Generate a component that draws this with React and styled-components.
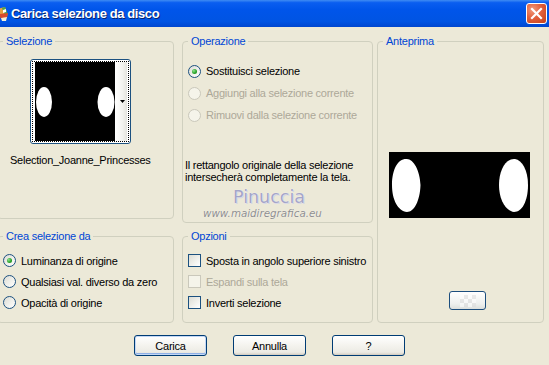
import React from 'react';
import styled, { createGlobalStyle, css } from 'styled-components';

const GlobalStyle = createGlobalStyle`
  html, body { margin: 0; padding: 0; background: #ece9d8; }
  body {
    font-family: "Liberation Sans", Arial, sans-serif;
    font-size: 11px;
    letter-spacing: -0.25px;
    color: #000;
    overflow: hidden;
  }
`;

const Window = styled.div`
  width: 549px;
  height: 365px;
  background: #ece9d8;
  display: flex;
  flex-direction: column;
  overflow: hidden;
`;

const TitleBar = styled.div`
  height: 27px;
  flex: none;
  display: flex;
  align-items: center;
  padding-right: 2px;
  background: linear-gradient(180deg, #3f8cf3 0%, #0a5ef0 10%, #0055ea 35%, #0054e3 80%, #0046cf 100%);
`;

const TitleText = styled.span`
  margin-left: 2px;
  color: #fff;
  font-weight: bold;
  font-size: 13px;
  letter-spacing: -0.4px;
  text-shadow: 1px 1px 0 #0a246a;
`;

const CloseButton = styled.div`
  margin-left: auto;
  width: 21px;
  height: 21px;
  box-sizing: border-box;
  border: 1px solid #fff;
  border-radius: 3px;
  background: radial-gradient(circle at 30% 30%, #f09a7d 0%, #e2603c 45%, #c3401a 100%);
  display: flex;
  align-items: center;
  justify-content: center;
`;

const Body = styled.div`
  display: flex;
  padding-top: 8px;
  margin-left: -3px;
`;

const Column = styled.div`
  display: flex;
  flex-direction: column;
  justify-content: space-between;
  width: ${p => p.$w}px;
  height: 288px;
  margin-left: ${p => p.$ml || 0}px;
`;

const Group = styled.fieldset`
  margin: 0;
  margin-left: ${p => p.$ml || 0}px;
  padding: 0 5px;
  min-width: 0;
  box-sizing: border-box;
  width: ${p => (p.$w ? `${p.$w}px` : 'auto')};
  height: ${p => p.$h}px;
  border: 1px solid #d0d0bf;
  border-radius: 4px;
  display: flex;
  flex-direction: column;
  align-items: flex-start;
`;

const Legend = styled.legend`
  padding: 0 3px;
  color: #0046d5;
  line-height: 13px;
`;

const OptionList = styled.div`
  display: flex;
  flex-direction: column;
  margin-top: ${p => p.$mt}px;
`;

const OptionRow = styled.div`
  display: flex;
  align-items: center;
  gap: 5px;
  height: ${p => p.$h || 21}px;
  color: ${p => (p.$disabled ? '#aca899' : '#000')};
`;

const controlBase = css`
  width: 13px;
  height: 13px;
  box-sizing: border-box;
  flex: none;
  border: 1px solid ${p => (p.$disabled ? '#cac8bb' : '#1c5180')};
  background: ${p => (p.$disabled ? '#f5f4ea' : 'linear-gradient(135deg, #dcdcd4 0%, #f2f2ee 60%, #ffffff 100%)')};
`;

const RadioCircle = styled.span`
  ${controlBase};
  border-radius: 50%;
  display: flex;
  align-items: center;
  justify-content: center;

  &::after {
    content: '';
    display: ${p => (p.$checked ? 'block' : 'none')};
    width: 5px;
    height: 5px;
    border-radius: 50%;
    background: radial-gradient(circle at 35% 35%, #8fe28f 0%, #2aa52a 55%, #1a801a 100%);
  }
`;

const CheckSquare = styled.span`
  ${controlBase};
`;

const Thumb = styled.div`
  margin: 11px 0 0 27px;
  padding: 1px;
  border: 1px solid #1c5180;
  border-radius: 3px;
  background: #fff;
`;

const ThumbFocus = styled.div`
  display: flex;
  border: 1px dotted #000;
  padding: 0 1px 0 2px;
`;

const ThumbStrip = styled.div`
  width: 12px;
  height: 79px;
  background: linear-gradient(90deg, #ffffff 0%, #f4f4f0 60%, #e4e4de 100%);
  display: flex;
  align-items: center;
  justify-content: flex-end;
`;

const ThumbCaption = styled.div`
  margin: 10px 0 0 7px;
  line-height: 13px;
`;

const Note = styled.p`
  margin: 33px 0 0 -3px;
  line-height: 12px;
`;

const Watermark = styled.div`
  display: flex;
  flex-direction: column;
  align-items: flex-start;
  margin-top: 4px;
  letter-spacing: 0;
`;

const WaterName = styled.span`
  margin-left: 45px;
  font-family: "DejaVu Sans", sans-serif;
  font-size: 17.5px;
  line-height: 20px;
  color: #a5a5c8;
  text-shadow: 0 0 1px #ffffff, 1px 1px 0 #d6d6e4;
`;

const WaterUrl = styled.span`
  margin-left: 15px;
  font-family: "DejaVu Sans", sans-serif;
  font-style: italic;
  font-size: 10.3px;
  line-height: 12px;
  color: #8e8e8e;
  text-shadow: 0 0 1px #ffffff;
`;

const Preview = styled.div`
  margin: 104px 0 0 6px;
  display: flex;
`;

const SmallButton = styled.div`
  margin: 73px 0 0 66px;
  width: 37px;
  height: 19px;
  box-sizing: border-box;
  border: 1px solid #1c4e7e;
  border-radius: 3px;
  background: linear-gradient(180deg, #ffffff 0%, #eef0ee 70%, #dcdfdc 100%);
  display: flex;
  align-items: center;
  justify-content: center;
`;

const Checker = styled.span`
  width: 16px;
  height: 12px;
  opacity: 0.55;
  background-color: #ffffff;
  background-image: conic-gradient(#dcdcdc 25%, #ffffff 0 50%, #dcdcdc 0 75%, #ffffff 0);
  background-size: 8px 8px;
`;

const ButtonRow = styled.div`
  display: flex;
  gap: 26px;
  padding-left: 134px;
  margin-top: 12px;
`;

const Button = styled.button`
  width: 73px;
  height: 21px;
  padding: 0;
  font-family: inherit;
  font-size: 11px;
  letter-spacing: -0.25px;
  color: #000;
  border: 1px solid #003c74;
  border-radius: 3px;
  background: linear-gradient(180deg, #ffffff 0%, #f4f3ee 50%, #ecebe4 85%, #d6d0c5 100%);
  box-shadow: ${p => (p.$default ? 'inset 0 0 0 1px #c3d7f5, inset 0 -1px 0 1px #8fb0e6' : 'inset 0 -1px 0 #d6d0c5')};
`;

function TitleIcon() {
  return (
    <svg width="9" height="18" viewBox="7 0 9 18">
      <path d="M4 4 L12 2 L15 10 L8 13 Z" fill="#e8a040" />
      <path d="M9 3 L12 2 L15 10 L12 11 Z" fill="#4aa64a" />
      <path d="M6 9 L15 8 L14 13 L8 14 Z" fill="#d94a2b" />
      <path d="M8 13 L14 12 L13 16 L9 16 Z" fill="#f4f0d8" />
      <path d="M10 5 L13 4 L13 7 L10 8 Z" fill="#ffffff" />
    </svg>
  );
}

function CloseIcon() {
  return (
    <svg width="13" height="13" viewBox="0 0 13 13">
      <path d="M2 2 L11 11 M11 2 L2 11" stroke="#fff" strokeWidth="2.2" strokeLinecap="square" />
    </svg>
  );
}

function ThumbImage() {
  return (
    <svg width="80" height="79" viewBox="0 0 80 79" style={{ display: 'block' }}>
      <rect width="80" height="79" fill="#000" />
      <ellipse cx="9" cy="40" rx="8" ry="15" fill="#fff" />
      <ellipse cx="71" cy="40" rx="8.5" ry="15" fill="#fff" />
    </svg>
  );
}

function PreviewImage() {
  return (
    <svg width="141" height="66" viewBox="0 0 141 66" style={{ display: 'block' }}>
      <rect width="141" height="66" fill="#000" />
      <path d="M17 7 C24 6 31 18 31.5 33 C31 49 25 60 18 60 C9 59 3 48 3 33 C3 17 9 7 17 7 Z" fill="#fff" />
      <path d="M126 7 C133 8 139 18 139 33 C139 49 133 60 125 60 C117 59 110 48 110 33 C110 18 117 6 126 7 Z" fill="#fff" />
    </svg>
  );
}

function DropArrow() {
  return (
    <svg width="6" height="4" viewBox="0 0 6 4" style={{ marginRight: '1px', marginTop: '1px' }}>
      <path d="M0 0 H5 L2.5 3 Z" fill="#000" />
    </svg>
  );
}

function Radio({ label, checked, disabled, h }) {
  return (
    <OptionRow $disabled={disabled} $h={h}>
      <RadioCircle $checked={checked} $disabled={disabled} />
      {label}
    </OptionRow>
  );
}

function Check({ label, disabled }) {
  return (
    <OptionRow $disabled={disabled}>
      <CheckSquare $disabled={disabled} />
      {label}
    </OptionRow>
  );
}

export default function App() {
  return (
    <>
      <GlobalStyle />
      <Window>
        <TitleBar>
          <TitleIcon />
          <TitleText>Carica selezione da disco</TitleText>
          <CloseButton>
            <CloseIcon />
          </CloseButton>
        </TitleBar>

        <Body>
          <Column $w={177}>
            <Group $h={184}>
              <Legend>Selezione</Legend>
              <Thumb>
                <ThumbFocus>
                  <ThumbImage />
                  <ThumbStrip>
                    <DropArrow />
                  </ThumbStrip>
                </ThumbFocus>
              </Thumb>
              <ThumbCaption>Selection_Joanne_Princesses</ThumbCaption>
            </Group>
            <Group $h={93}>
              <Legend>Crea selezione da</Legend>
              <OptionList $mt={7}>
                <Radio label="Luminanza di origine" checked />
                <Radio label="Qualsiasi val. diverso da zero" />
                <Radio label="Opacità di origine" />
              </OptionList>
            </Group>
          </Column>

          <Column $w={191} $ml={8}>
            <Group $h={188}>
              <Legend>Operazione</Legend>
              <OptionList $mt={12}>
                <Radio label="Sostituisci selezione" checked h={22} />
                <Radio label="Aggiungi alla selezione corrente" disabled h={22} />
                <Radio label="Rimuovi dalla selezione corrente" disabled h={22} />
              </OptionList>
              <Note>
                Il rettangolo originale della selezione
                <br />
                intersecherà completamente la tela.
              </Note>
              <Watermark>
                <WaterName>Pinuccia</WaterName>
                <WaterUrl>www.maidiregrafica.eu</WaterUrl>
              </Watermark>
            </Group>
            <Group $h={93}>
              <Legend>Opzioni</Legend>
              <OptionList $mt={7}>
                <Check label="Sposta in angolo superiore sinistro" />
                <Check label="Espandi sulla tela" disabled />
                <Check label="Inverti selezione" />
              </OptionList>
            </Group>
          </Column>

          <Group $w={167} $h={288} $ml={4}>
            <Legend>Anteprima</Legend>
            <Preview>
              <PreviewImage />
            </Preview>
            <SmallButton>
              <Checker />
            </SmallButton>
          </Group>
        </Body>

        <ButtonRow>
          <Button $default>Carica</Button>
          <Button>Annulla</Button>
          <Button>?</Button>
        </ButtonRow>
      </Window>
    </>
  );
}
